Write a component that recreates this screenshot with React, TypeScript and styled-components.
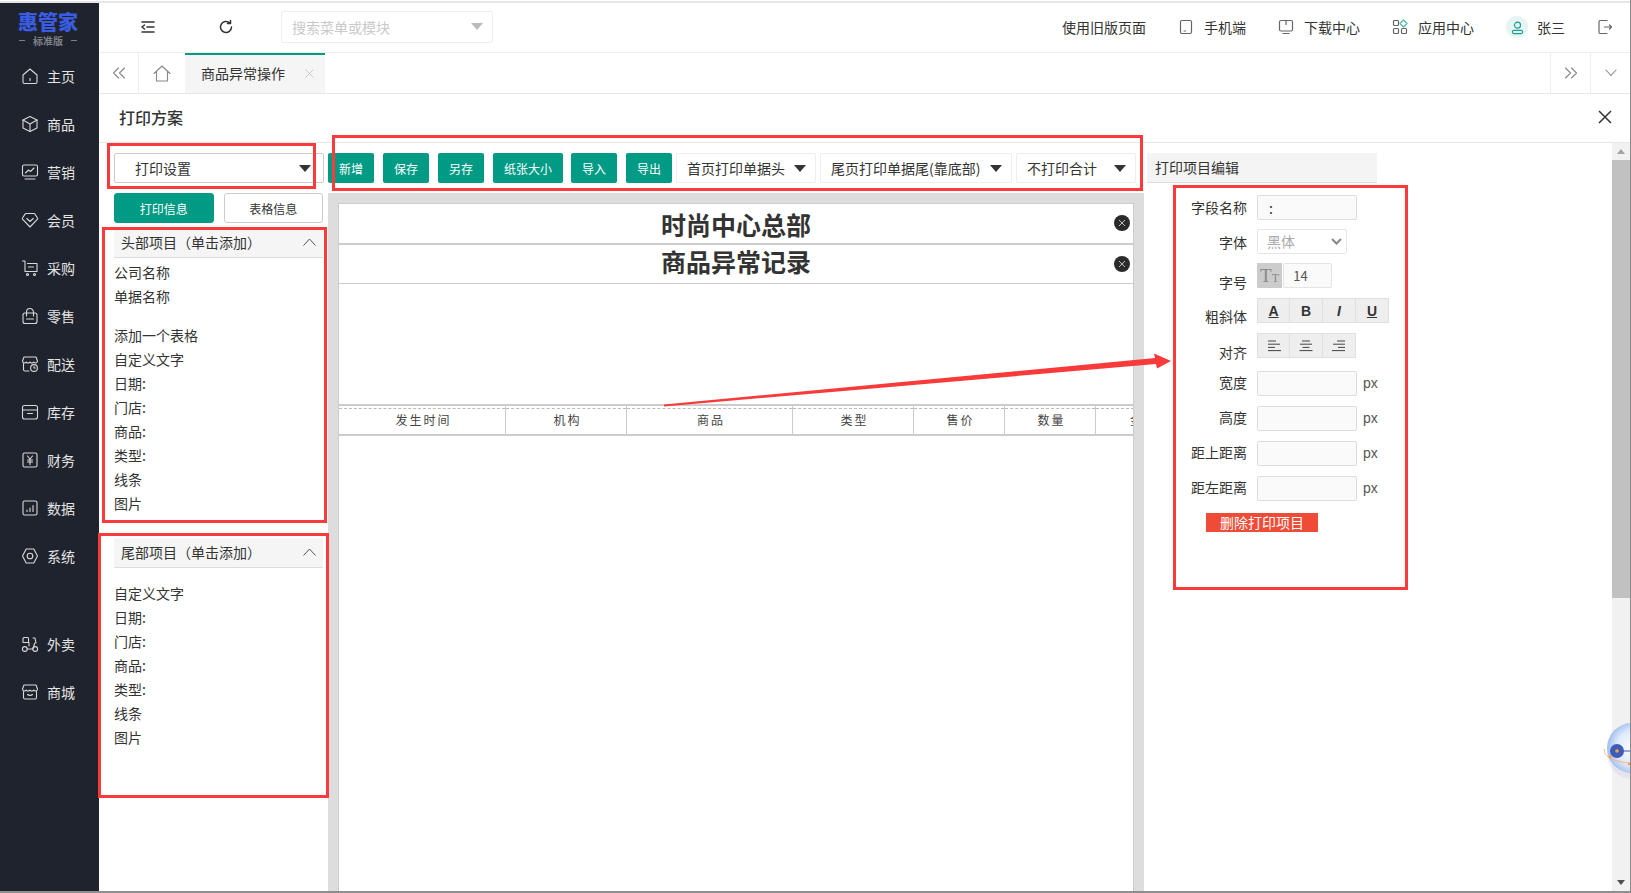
import React from "react";
import styled, { createGlobalStyle } from "styled-components";

const Global = createGlobalStyle`
  html, body { margin: 0; padding: 0; background: #fff; overflow: hidden; }
  * { box-sizing: border-box; }
  body { font-family: "Noto Sans CJK SC", "Noto Sans", sans-serif; font-size: 14px; color: #333; }
`;

const Page = styled.div`
  position: relative; width: 1631px; height: 893px; display: flex; flex-direction: column;
  overflow: hidden; background: #fff; border-right: 1px solid #8a8a8a;
`;
const TopLine = styled.div`height: 3px; flex: none; background: #fff; border-bottom: 2px solid #e6e6e6;`;
const Shell = styled.div`flex: 1; min-height: 0; display: flex;`;
const BottomLine = styled.div`height: 2px; flex: none; background: #8f8f8f;`;

const Sidebar = styled.aside`width: 99px; flex: none; background: #1f232d; display: flex; flex-direction: column;`;
const Logo = styled.div`height: 49px; display: flex; flex-direction: column; align-items: center; padding: 6px 3px 0 0;`;
const LogoName = styled.div`font-size: 20px; line-height: 26px; font-weight: 900; color: #3a5ce2;`;
const LogoSub = styled.div`
  font-size: 10px; line-height: 11px; font-weight: 700; color: #7d8087; display: flex; align-items: center; gap: 8px;
  &::before, &::after { content: ""; width: 6px; height: 1px; background: #7d8087; }
`;
const NavItem = styled.div<{ $gap?: number }>`
  height: 48px; display: flex; align-items: center; gap: 8px; padding-left: 21px; color: #e4e4e4; font-size: 14px;
  margin-top: ${p => p.$gap ?? 0}px;
  svg { width: 18px; height: 18px; flex: none; fill: none; stroke: #d9d9d9; stroke-width: 1.1; stroke-linecap: round; stroke-linejoin: round; }
`;

const Main = styled.main`flex: 1; min-width: 0; display: flex; flex-direction: column;`;
const Header = styled.header`height: 50px; flex: none; display: flex; align-items: center; border-bottom: 1px solid #eee; padding: 0 17px 1px 10px;`;
const HeaderIcon = styled.div`
  width: 78px; display: flex; justify-content: center; align-items: center;
  svg { width: 16px; height: 16px; fill: none; stroke: #333; stroke-width: 1.5; stroke-linecap: round; stroke-linejoin: round; }
`;
const Search = styled.div`
  width: 212px; height: 32px; margin-left: 16px; border: 1px solid #eee; border-radius: 2px; display: flex; align-items: center;
  justify-content: space-between; padding: 0 9px 1px 10px; color: #c9c9c9; font-size: 14px;
`;
const SearchArrow = styled.span`width: 0; height: 0; border-left: 6px solid transparent; border-right: 6px solid transparent; border-top: 7px solid #bbb;`;
const HeaderRight = styled.div`margin-left: auto; display: flex; align-items: center; gap: 32px; font-size: 14px; color: #333;`;
const HeaderLink = styled.div<{ $gap?: number }>`
  display: flex; align-items: center; gap: ${p => p.$gap ?? 10}px;
  svg { width: 16px; height: 16px; flex: none; fill: none; stroke: #666; stroke-width: 1.2; stroke-linecap: round; stroke-linejoin: round; }
`;
const Avatar = styled.div`
  width: 22px; height: 22px; border-radius: 50%; background: #e6f5f3; display: flex; align-items: center; justify-content: center;
  svg { width: 15px; height: 15px; stroke: #14a08e; }
`;

const TabBar = styled.div`height: 41px; flex: none; display: flex; border-bottom: 1px solid #e8e8e8;`;
const TabCell = styled.div<{ $w: number; $line?: "left" | "right" }>`
  width: ${p => p.$w}px; flex: none; display: flex; align-items: center; justify-content: center;
  ${p => p.$line === "left" ? "border-left: 1px solid #eee;" : ""}
  ${p => p.$line === "right" ? "border-right: 1px solid #eee;" : ""}
  svg { fill: none; stroke: #888; stroke-width: 1.1; stroke-linecap: round; stroke-linejoin: round; }
`;
const Tab = styled.div`
  width: 140px; flex: none; background: #f5f5f5; border-top: 2px solid #009a85; display: flex; align-items: center;
  padding: 0 10px 2px 16px; justify-content: space-between; color: #333; font-size: 14px;
  svg { width: 11px; height: 11px; stroke: #c4c4c4; stroke-width: 1.2; fill: none; }
`;
const Spacer = styled.div`flex: 1;`;

const TitleRow = styled.div`
  height: 49px; flex: none; display: flex; align-items: center; justify-content: space-between; padding: 0 17px 2px 20px;
  border-bottom: 1px solid #e8e8e8;
  svg { width: 16px; height: 16px; stroke: #333; stroke-width: 1.5; fill: none; }
`;
const Title = styled.h1`margin: 0; font-size: 16px; font-weight: 500; color: #333;`;

const Body = styled.div`flex: 1; min-height: 0; display: flex;`;
const LeftCol = styled.div`width: 229px; flex: none; padding: 10px 5px 0 15px; display: flex; flex-direction: column;`;
const Select = styled.div<{ $w: number; $pad?: number; $strong?: boolean; $end?: number }>`
  width: ${p => p.$w}px; height: 30px; flex: none; background: #fff; border: 1px solid ${p => p.$strong ? "#ccc" : "#eee"}; border-radius: 2px;
  display: flex; align-items: center; justify-content: space-between; padding: 0 ${p => p.$end ?? 9}px 0 ${p => p.$pad ?? 10}px; font-size: 14px; color: #333;
  &::after { content: ""; width: 0; height: 0; border-left: 6px solid transparent; border-right: 6px solid transparent; border-top: 7px solid #333; }
`;
const InfoTabs = styled.div`display: flex; gap: 10px; margin-top: 10px;`;
const InfoTab = styled.div<{ $active?: boolean }>`
  width: 100px; height: 30px; display: flex; align-items: center; justify-content: center; font-size: 12px; border-radius: 3px;
  color: ${p => p.$active ? "#fff" : "#333"}; background: ${p => p.$active ? "#009a85" : "#fff"};
  border: 1px solid ${p => p.$active ? "#009a85" : "#ccc"};
`;
const Section = styled.section<{ $top: number }>`margin-top: ${p => p.$top}px;`;
const SectionHead = styled.div<{ $lift?: number }>`
  height: 30px; background: #f5f5f5; border-bottom: 1px solid #ddd; display: flex; align-items: center; justify-content: space-between;
  padding: 0 7px ${p => p.$lift ?? 2}px 7px; font-size: 14px; color: #333;
  svg { width: 13px; height: 8px; stroke: #555; stroke-width: 1; fill: none; }
`;
const ItemList = styled.div<{ $pad: number }>`padding-top: ${p => p.$pad}px;`;
const Item = styled.div<{ $after?: number }>`height: 24px; line-height: 24px; font-size: 14px; color: #333; margin-bottom: ${p => p.$after ?? 0}px;`;

const CenterCol = styled.div`width: 816px; flex: none; padding-top: 10px; display: flex; flex-direction: column;`;
const Toolbar = styled.div`height: 30px; flex: none; display: flex;`;
const ActionBtn = styled.div<{ $w: number; $gap: number }>`
  width: ${p => p.$w}px; margin-right: ${p => p.$gap}px; height: 30px; background: #009a85; color: #fff; border-radius: 2px; font-size: 12px;
  display: flex; align-items: center; justify-content: center; flex: none;
`;
const ToolSelectWrap = styled.div`margin-right: 4px; flex: none;`;
const Canvas = styled.div`flex: 1; min-height: 0; margin-top: 10px; background: #ddd; padding: 10px 10px 0 10px; display: flex;`;
const Paper = styled.div`flex: 1; min-width: 0; background: #fff; border: 1px solid #ccc; border-bottom: 0; overflow: hidden;`;
const PaperHead = styled.div<{ $h: number; $line: number; $lift?: number; $sink?: number }>`
  position: relative; height: ${p => p.$h}px; border-bottom: ${p => p.$line}px solid #ccc; display: flex; align-items: center; justify-content: center;
  padding: ${p => p.$sink ?? 0}px 0 ${p => p.$lift ?? 0}px; font-size: 25px; font-weight: 700; color: #333; line-height: 1;
`;
const RemoveDot = styled.div`
  position: absolute; right: 3px; top: 11px; width: 16px; height: 16px; border-radius: 50%; background: #2b2b2b;
  display: flex; align-items: center; justify-content: center;
  svg { width: 8px; height: 8px; stroke: #fff; stroke-width: 1.4; fill: none; }
`;
const PrintTable = styled.div`
  margin-top: 120px; display: grid; grid-template-columns: 167px 121px 166px 121px 91px 91px 94px; width: 851px;
  border-top: 2px solid #ccc; border-bottom: 2px solid #ccc;
`;
const PrintCell = styled.div`
  position: relative; height: 28px; padding: 0 0 1px 3px; border-right: 1px solid #ccc; display: flex; align-items: center; justify-content: center;
  font-size: 12px; letter-spacing: 2px; color: #444;
  &::before { content: ""; position: absolute; top: 2px; left: 0; right: 0; border-top: 1px dashed #bbb; }
`;

const RightCol = styled.div`flex: 1; min-width: 0; padding: 10px 0 0 3px; display: flex; flex-direction: column;`;
const EditHead = styled.div`width: 230px; height: 30px; flex: none; background: #f4f4f4; border-bottom: 1px solid #ddd; display: flex; align-items: center; padding: 0 0 2px 8px; font-size: 14px; color: #333;`;
const Form = styled.div`display: flex; flex-direction: column; padding-top: 12px;`;
const Row = styled.div<{ $top?: number }>`display: flex; align-items: flex-start; height: 25px; margin-top: ${p => p.$top ?? 0}px;`;
const Label = styled.div<{ $drop?: number }>`
  width: 100px; height: 25px; line-height: 25px; text-align: right; margin-right: 10px; flex: none; white-space: nowrap; font-size: 14px; color: #333;
  transform: translateY(${p => p.$drop ?? 0}px);
`;
const Input = styled.div<{ $w?: number }>`
  width: ${p => p.$w ?? 100}px; height: 25px; background: #fafafa; border: 1px solid #ddd; border-radius: 2px; font-size: 14px; color: #333;
  display: flex; align-items: center;
`;
const ColonValue = styled.span`padding-left: 11px;`;
const SizeValue = styled(Input)`border-color: #e4e4e4; justify-content: center; margin-left: 1px; padding-right: 14px; font-size: 13px; color: #555;`;
const Unit = styled.span`margin-left: 6px; line-height: 25px; color: #555; font-size: 14px; font-family: "Liberation Sans", sans-serif;`;
const FontSelect = styled.div`
  width: 90px; height: 25px; border: 1px solid #e6e6e6; border-radius: 2px; background: #fff; color: #aaa; font-size: 14px;
  display: flex; align-items: center; justify-content: space-between; padding: 0 4px 1px 9px;
  svg { width: 11px; height: 7px; stroke: #888; stroke-width: 2; fill: none; }
`;
const TtBox = styled.div`
  width: 25px; height: 25px; background: #ccc; color: #888; display: flex; align-items: baseline; justify-content: center;
  font-family: "Liberation Serif", serif; line-height: 25px;
`;
const BigT = styled.span`font-size: 19px;`;
const SmallT = styled.span`font-size: 12px;`;
const BtnGroup = styled.div`display: flex;`;
const StyleBtn = styled.div<{ $italic?: boolean; $under?: boolean }>`
  width: 33px; height: 25px; background: #eee; border: 1px solid #e0e0e0; display: flex; align-items: center; justify-content: center;
  font-family: "Liberation Sans", sans-serif; font-weight: 700; font-size: 14px; color: #333;
  font-style: ${p => p.$italic ? "italic" : "normal"}; text-decoration: ${p => p.$under ? "underline" : "none"};
  & + & { border-left: 0; }
  svg { width: 14px; height: 14px; stroke: #444; stroke-width: 1; fill: none; }
`;
const DeleteBtn = styled.div`
  width: 112px; height: 19px; margin: 12px 0 0 59px; background: #ef4b36; color: #fff; font-size: 14px; line-height: 18px; text-align: center;
`;

const Scrollbar = styled.div`width: 18px; flex: none; background: #f1f1f1; display: flex; flex-direction: column; align-items: stretch;`;
const ScrollBtn = styled.div<{ $down?: boolean }>`
  height: 17px; flex: none; display: flex; align-items: center; justify-content: center;
  &::after {
    content: ""; width: 0; height: 0; border-left: 4px solid transparent; border-right: 4px solid transparent;
    ${p => p.$down ? "border-top: 5px solid #505050;" : "border-bottom: 5px solid #a3a3a3;"}
  }
`;
const ScrollThumb = styled.div`height: 438px; background: #c1c1c1; flex: none;`;
const ScrollRest = styled.div`flex: 1;`;

const Mark = styled.div<{ $x: number; $y: number; $w: number; $h: number }>`
  position: absolute; left: ${p => p.$x}px; top: ${p => p.$y}px; width: ${p => p.$w}px; height: ${p => p.$h}px;
  border: 3px solid #fb3b3b; pointer-events: none;
`;
const ArrowLayer = styled.svg`position: absolute; left: 0; top: 0; width: 1631px; height: 893px; pointer-events: none;`;
const Ball = styled.svg`position: absolute; left: 1596px; top: 716px; width: 35px; height: 70px; pointer-events: none;`;

const navIcons: Record<string, React.ReactNode> = {
  主页: <><path d="M2 8 9 2l7 6v7a1.5 1.5 0 0 1-1.5 1.5h-11A1.5 1.5 0 0 1 2 15Z" /><path d="M9 11.5v2" /></>,
  商品: <><path d="M9 1.5 16 5v8l-7 3.5L2 13V5Z" /><path d="M2 5l7 4 7-4M9 9v7.5" /></>,
  营销: <><rect x="1.5" y="2" width="15" height="11" rx="1.5" /><path d="M4.5 10 7.5 7l2 1.5 3.5-3.5M4 16h10" /></>,
  会员: <><path d="M5 2.5h8a1 1 0 0 1 .8.4L16.5 7a1 1 0 0 1 0 1.2L9 16 1.5 8.2a1 1 0 0 1 0-1.2L4.2 2.9a1 1 0 0 1 .8-.4Z" /><path d="M5.8 7.5 9 10.5l3.2-3" /></>,
  采购: <><path d="M1.5 2H4v10.5h12V4.5H6.5" /><path d="M7.5 8h5" /><circle cx="6.5" cy="15.5" r="1" /><circle cx="13.5" cy="15.5" r="1" /></>,
  零售: <><rect x="2" y="6" width="14" height="10.5" rx="2" /><path d="M5.5 9V5a3.5 3.5 0 0 1 7 0v4" /><path d="M5.5 12h7" /></>,
  配送: <><path d="M3 2h12l1.5 4a2 2 0 0 1-3.7 1 2.2 2.2 0 0 1-3.8 0 2.2 2.2 0 0 1-3.8 0A2 2 0 0 1 1.5 6Z" /><path d="M2.5 8.5v6a1.5 1.5 0 0 0 1.5 1.5h4" /><circle cx="13" cy="13" r="3.4" /><path d="M13 11.5V13h1.4" /></>,
  库存: <><rect x="1.5" y="2.5" width="15" height="13.5" rx="2" /><path d="M1.5 7h15M6.5 10.5h5" /></>,
  财务: <><rect x="2" y="2" width="14" height="14" rx="1.5" /><path d="m6.5 5 2.5 3 2.5-3M6.5 9h5M6.5 11h5M9 8v5.5" /></>,
  数据: <><rect x="2" y="2" width="14" height="14" rx="1.5" /><path d="M6 12.5v-1.5M9 12.5V9M12 12.5V6.5" /></>,
  系统: <><path d="M5.2 2h7.6L16.5 9l-3.7 7H5.2L1.5 9Z" /><circle cx="9" cy="9" r="2.8" /></>,
  外卖: <><circle cx="3.8" cy="14" r="2.4" /><circle cx="14.2" cy="14" r="2.4" /><path d="M6.2 14h5.6l2-6M12 3h2l1 5M3 7.5h5v3.5M2 7.5V3.5a1 1 0 0 1 1-1h3.5a1 1 0 0 1 1 1v4" /></>,
  商城: <><path d="M3 2h12l1.5 4a2 2 0 0 1-3.7 1 2.2 2.2 0 0 1-3.8 0 2.2 2.2 0 0 1-3.8 0A2 2 0 0 1 1.5 6Z" /><path d="M2.5 8.5v6A1.5 1.5 0 0 0 4 16h10a1.5 1.5 0 0 0 1.5-1.5v-6M6.5 11.5c1.2 1.2 3.8 1.2 5 0" /></>,
};

const nav: { name: string; gap?: number }[] = [
  { name: "主页" }, { name: "商品" }, { name: "营销" }, { name: "会员" }, { name: "采购" }, { name: "零售" },
  { name: "配送" }, { name: "库存" }, { name: "财务" }, { name: "数据" }, { name: "系统" }, { name: "外卖", gap: 40 }, { name: "商城" },
];

const Icon: React.FC<{ children: React.ReactNode }> = ({ children }) => <svg viewBox="0 0 18 18">{children}</svg>;
const Chevron = () => <svg viewBox="0 0 13 8"><path d="M0.5 7.5 6.5 1l6 6.5" /></svg>;
const Cross = () => <svg viewBox="0 0 16 16"><path d="M2 2l12 12M14 2 2 14" /></svg>;

const AlignIcon: React.FC<{ kind: "l" | "c" | "r" }> = ({ kind }) => {
  const rows = [8, 12, 7, 13];
  return (
    <svg viewBox="0 0 14 14">
      {rows.map((w, i) => {
        const x = kind === "l" ? 1 : kind === "c" ? (14 - w) / 2 : 13 - w;
        return <path key={i} d={`M${x} ${2 + i * 3.2}h${w}`} />;
      })}
    </svg>
  );
};

const headItems = ["公司名称", "单据名称", "添加一个表格", "自定义文字", "日期:", "门店:", "商品:", "类型:", "线条", "图片"];
const tailItems = ["自定义文字", "日期:", "门店:", "商品:", "类型:", "线条", "图片"];
const columns = ["发生时间", "机构", "商品", "类型", "售价", "数量", "金额"];
const actions: [string, number, number][] = [["新增", 46, 9], ["保存", 46, 9], ["另存", 46, 9], ["纸张大小", 70, 8], ["导入", 46, 9], ["导出", 46, 4]];
const lengths: [string, number][] = [["宽度", 13], ["高度", 10], ["距上距离", 10], ["距左距离", 10]];

export default function App() {
  return (
    <Page>
      <Global />
      <TopLine />
      <Shell>
        <Sidebar>
          <Logo>
            <LogoName>惠管家</LogoName>
            <LogoSub>标准版</LogoSub>
          </Logo>
          {nav.map(n => (
            <NavItem key={n.name} $gap={n.gap}>
              <Icon>{navIcons[n.name]}</Icon>
              {n.name}
            </NavItem>
          ))}
        </Sidebar>
        <Main>
          <Header>
            <HeaderIcon>
              <svg viewBox="0 0 16 16"><path d="M2 3h12M7 8h7M2 13h12M4.5 6 2 8l2.5 2" /></svg>
            </HeaderIcon>
            <HeaderIcon>
              <svg viewBox="0 0 16 16"><path d="M13.5 8A5.5 5.5 0 1 1 11.8 4M12.5 1.5V4.5H9.5" /></svg>
            </HeaderIcon>
            <Search>搜索菜单或模块<SearchArrow /></Search>
            <HeaderRight>
              <HeaderLink>使用旧版页面</HeaderLink>
              <HeaderLink>
                <svg viewBox="0 0 16 16"><rect x="2.5" y="1.5" width="11" height="13" rx="1.5" /><path d="M6 12h1.5" /></svg>
                手机端
              </HeaderLink>
              <HeaderLink>
                <svg viewBox="0 0 16 16"><rect x="1.5" y="1.5" width="13" height="10.5" rx="1.5" /><path d="M5 14.5h6M8 1.5v4" /></svg>
                下载中心
              </HeaderLink>
              <HeaderLink>
                <svg viewBox="0 0 16 16">
                  <rect x="1.5" y="1.5" width="5" height="5" rx="1" />
                  <path d="M11.5 1 15 4.5 11.5 8 8 4.5Z" stroke="#4fb5a8" />
                  <rect x="1.5" y="9.5" width="5" height="5" rx="1" />
                  <rect x="9.5" y="9.5" width="5" height="5" rx="1" />
                </svg>
                应用中心
              </HeaderLink>
              <HeaderLink $gap={9}>
                <Avatar>
                  <svg viewBox="0 0 16 16"><circle cx="8" cy="5.5" r="3.2" /><rect x="2.5" y="11" width="11" height="3.5" rx="1.7" /></svg>
                </Avatar>
                张三
              </HeaderLink>
              <HeaderLink>
                <svg viewBox="0 0 16 16"><path d="M10 1.5H3A1.2 1.2 0 0 0 2 2.7v10.6a1.2 1.2 0 0 0 1 1.2h7M7.5 8h7M12.5 6l2 2-2 2" /></svg>
              </HeaderLink>
            </HeaderRight>
          </Header>
          <TabBar>
            <TabCell $w={40} $line="right">
              <svg width="14" height="12" viewBox="0 0 14 12"><path d="M6.5 1 1.5 6l5 5M12.5 1l-5 5 5 5" /></svg>
            </TabCell>
            <TabCell $w={46}>
              <svg width="18" height="17" viewBox="0 0 18 17"><path d="M1 8.5 9 1l8 7.5M3.5 7v9h11V7" /></svg>
            </TabCell>
            <Tab>商品异常操作<Cross /></Tab>
            <Spacer />
            <TabCell $w={40} $line="left">
              <svg width="14" height="12" viewBox="0 0 14 12"><path d="M1.5 1l5 5-5 5M7.5 1l5 5-5 5" /></svg>
            </TabCell>
            <TabCell $w={40} $line="left">
              <svg width="12" height="8" viewBox="0 0 12 8"><path d="M1 1l5 5.5L11 1" /></svg>
            </TabCell>
          </TabBar>
          <TitleRow>
            <Title>打印方案</Title>
            <Cross />
          </TitleRow>
          <Body>
            <LeftCol>
              <Select $w={210} $pad={20} $end={12} $strong>打印设置</Select>
              <InfoTabs>
                <InfoTab $active>打印信息</InfoTab>
                <InfoTab>表格信息</InfoTab>
              </InfoTabs>
              <Section $top={5}>
                <SectionHead>头部项目（单击添加）<Chevron /></SectionHead>
                <ItemList $pad={2}>
                  {headItems.map((t, i) => <Item key={t} $after={i === 1 ? 15 : 0}>{t}</Item>)}
                </ItemList>
              </Section>
              <Section $top={23}>
                <SectionHead $lift={1}>尾部项目（单击添加）<Chevron /></SectionHead>
                <ItemList $pad={13}>
                  {tailItems.map(t => <Item key={t}>{t}</Item>)}
                </ItemList>
              </Section>
            </LeftCol>
            <CenterCol>
              <Toolbar>
                {actions.map(([t, w, g]) => <ActionBtn key={t} $w={w} $gap={g}>{t}</ActionBtn>)}
                <ToolSelectWrap><Select $w={140}>首页打印单据头</Select></ToolSelectWrap>
                <ToolSelectWrap><Select $w={192}>尾页打印单据尾(靠底部)</Select></ToolSelectWrap>
                <ToolSelectWrap><Select $w={120}>不打印合计</Select></ToolSelectWrap>
              </Toolbar>
              <Canvas>
                <Paper>
                  <PaperHead $h={41} $line={2} $sink={2}>时尚中心总部<RemoveDot><Cross /></RemoveDot></PaperHead>
                  <PaperHead $h={39} $line={1} $lift={5}>商品异常记录<RemoveDot><Cross /></RemoveDot></PaperHead>
                  <PrintTable>
                    {columns.map(c => <PrintCell key={c}>{c}</PrintCell>)}
                  </PrintTable>
                </Paper>
              </Canvas>
            </CenterCol>
            <RightCol>
              <EditHead>打印项目编辑</EditHead>
              <Form>
                <Row><Label>字段名称</Label><Input><ColonValue>:</ColonValue></Input></Row>
                <Row $top={9}>
                  <Label $drop={1}>字体</Label>
                  <FontSelect>黑体<svg viewBox="0 0 11 7"><path d="M1 1l4.5 4.5L10 1" /></svg></FontSelect>
                </Row>
                <Row $top={9}>
                  <Label $drop={7}>字号</Label>
                  <TtBox><BigT>T</BigT><SmallT>T</SmallT></TtBox>
                  <SizeValue $w={49}>14</SizeValue>
                </Row>
                <Row $top={10}>
                  <Label $drop={6}>粗斜体</Label>
                  <BtnGroup>
                    <StyleBtn $under>A</StyleBtn>
                    <StyleBtn>B</StyleBtn>
                    <StyleBtn $italic>I</StyleBtn>
                    <StyleBtn $under>U</StyleBtn>
                  </BtnGroup>
                </Row>
                <Row $top={10}>
                  <Label $drop={7}>对齐</Label>
                  <BtnGroup>
                    <StyleBtn><AlignIcon kind="l" /></StyleBtn>
                    <StyleBtn><AlignIcon kind="c" /></StyleBtn>
                    <StyleBtn><AlignIcon kind="r" /></StyleBtn>
                  </BtnGroup>
                </Row>
                {lengths.map(([t, top]) => (
                  <Row key={t} $top={top}><Label $drop={-1}>{t}</Label><Input /><Unit>px</Unit></Row>
                ))}
                <DeleteBtn>删除打印项目</DeleteBtn>
              </Form>
            </RightCol>
            <Scrollbar>
              <ScrollBtn />
              <ScrollThumb />
              <ScrollRest />
              <ScrollBtn $down />
            </Scrollbar>
          </Body>
        </Main>
      </Shell>
      <BottomLine />
      <Mark $x={107} $y={143} $w={209} $h={46} />
      <Mark $x={332} $y={135} $w={811} $h={56} />
      <Mark $x={102} $y={227} $w={225} $h={296} />
      <Mark $x={98} $y={533} $w={231} $h={265} />
      <Mark $x={1173} $y={185} $w={235} $h={405} />
      <ArrowLayer viewBox="0 0 1631 893">
        <polygon points="664,404.5 1155,358 1154,353.5 1171,361 1157,368.5 1156,364 664,406.5" fill="#f93a3a" />
      </ArrowLayer>
      <Ball viewBox="0 0 35 70">
        <defs>
          <radialGradient id="sphere" cx="0.55" cy="0.5" r="0.6">
            <stop offset="0" stopColor="#ffffff" />
            <stop offset="0.6" stopColor="#dfeafb" />
            <stop offset="1" stopColor="#8fb4ea" />
          </radialGradient>
        </defs>
        <ellipse cx="36" cy="37" rx="25" ry="26" fill="#d5d8e6" opacity="0.45" />
        <circle cx="36" cy="32" r="25" fill="url(#sphere)" />
        <path d="M14 35h28" stroke="#3a55b0" strokeWidth="1" />
        <circle cx="21" cy="35" r="7" fill="#3f5cb8" />
        <circle cx="21" cy="35" r="1.8" fill="#f3a043" />
        <path d="M9 33c-3 6 8 13 26 14" fill="none" stroke="#f6b77a" strokeWidth="1" />
        <circle cx="14" cy="41" r="1.4" fill="#f39a3e" />
        <circle cx="33" cy="48" r="1.2" fill="#f39a3e" />
      </Ball>
    </Page>
  );
}
